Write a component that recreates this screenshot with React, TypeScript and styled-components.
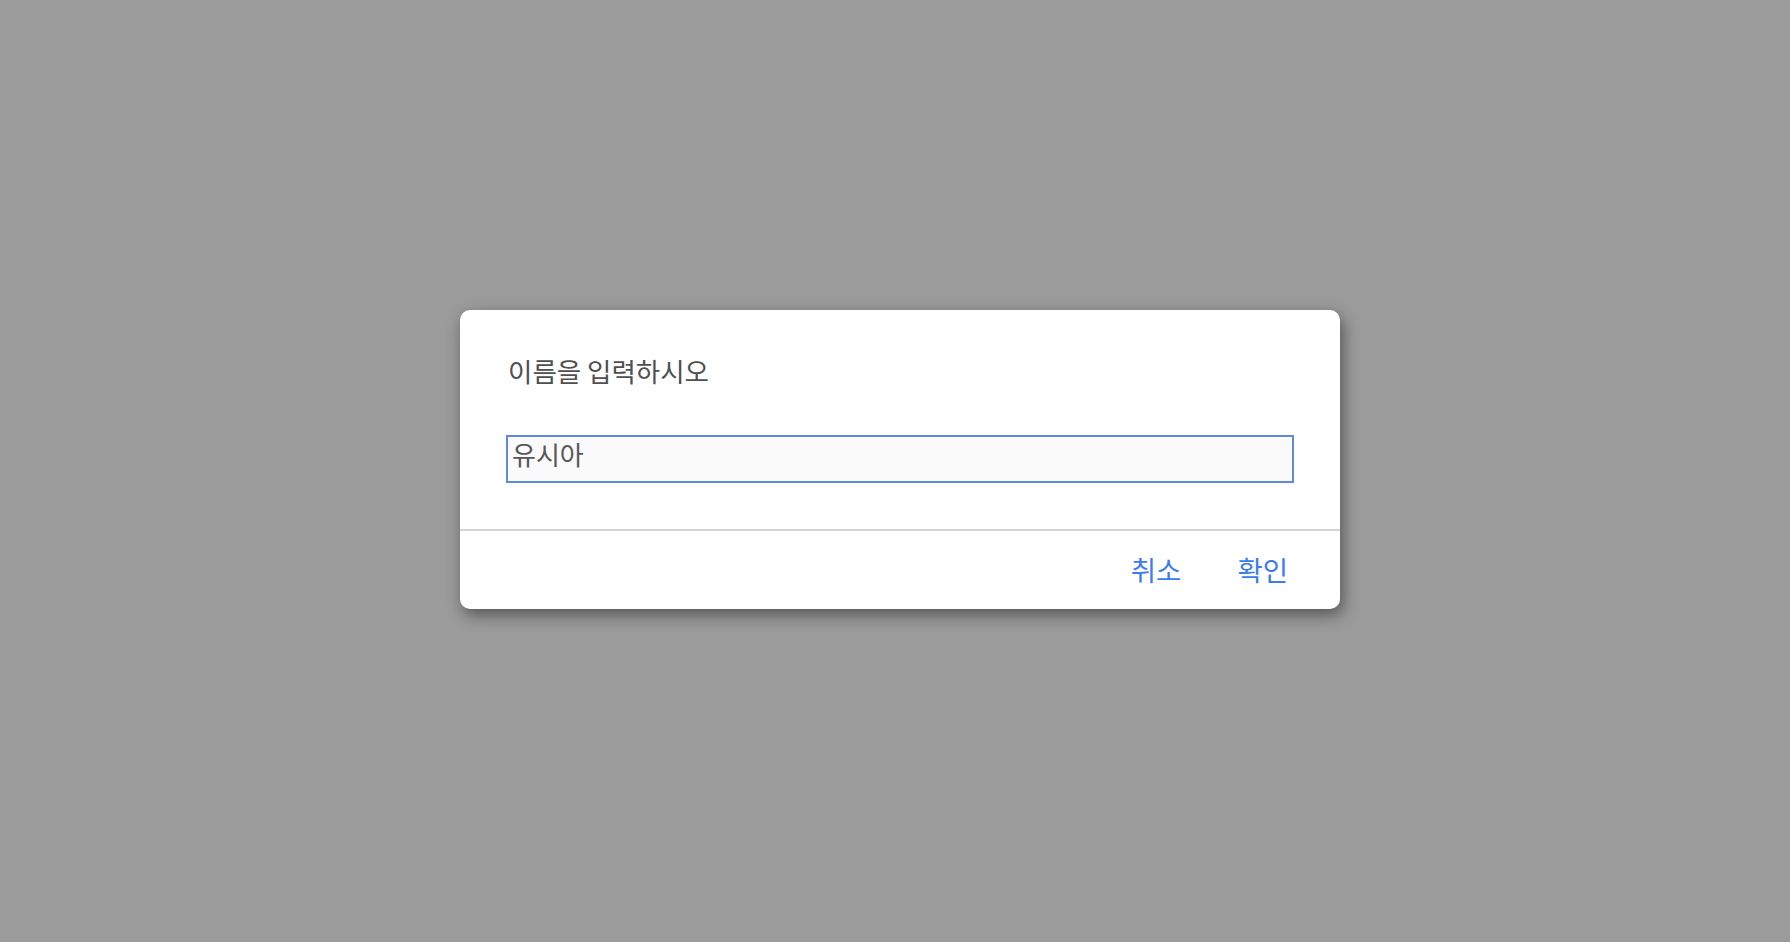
import React from "react";
import styled, { createGlobalStyle } from "styled-components";

const Global = createGlobalStyle`
  html, body { margin: 0; padding: 0; height: 100%; }
  body { background: #9b9b9b; font-family: "Noto Sans CJK KR", "Noto Sans", sans-serif; }
  #root { height: 100%; }
`;

const Backdrop = styled.div`
  width: 100%;
  height: 942px;
  display: flex;
  justify-content: flex-start;
  align-items: flex-start;
  padding: 310px 0 0 460px;
  box-sizing: border-box;
`;

const Dialog = styled.div`
  width: 880px;
  height: 299px;
  background: #fff;
  border-radius: 10px;
  box-shadow: 3px 6px 16px rgba(0, 0, 0, 0.45);
  display: flex;
  flex-direction: column;
  overflow: hidden;
`;

const Body = styled.div`
  padding: 42px 46px 46px;
  display: flex;
  flex-direction: column;
  gap: 45px;
  border-bottom: 2px solid #d3d3d3;
`;

const Title = styled.div`
  font-size: 26.5px;
  line-height: 38px;
  color: #4f4f4f;
  padding-left: 2px;
`;

const Input = styled.input`
  box-sizing: border-box;
  width: 100%;
  height: 48px;
  margin: 0;
  border: 2px solid #5e89e2;
  background: #fafafa;
  font-family: "Noto Sans CJK KR", "Noto Sans", sans-serif;
  font-size: 26px;
  color: #575757;
  padding: 0 2px 11px 4px;
  outline: none;
`;

const Footer = styled.div`
  flex: 1;
  display: flex;
  justify-content: flex-end;
  align-items: center;
  padding: 0 43px 2px 0;
  gap: 38px;
`;

const Button = styled.button`
  background: none;
  border: none;
  font-family: "Noto Sans CJK KR", "Noto Sans", sans-serif;
  font-size: 27.5px;
  color: #3a7bf0;
  padding: 0 9px;
  cursor: pointer;
`;

export default function App() {
  return (
    <>
      <Global />
      <Backdrop>
        <Dialog>
          <Body>
            <Title>이름을 입력하시오</Title>
            <Input defaultValue="유시아" />
          </Body>
          <Footer>
            <Button>취소</Button>
            <Button>확인</Button>
          </Footer>
        </Dialog>
      </Backdrop>
    </>
  );
}
